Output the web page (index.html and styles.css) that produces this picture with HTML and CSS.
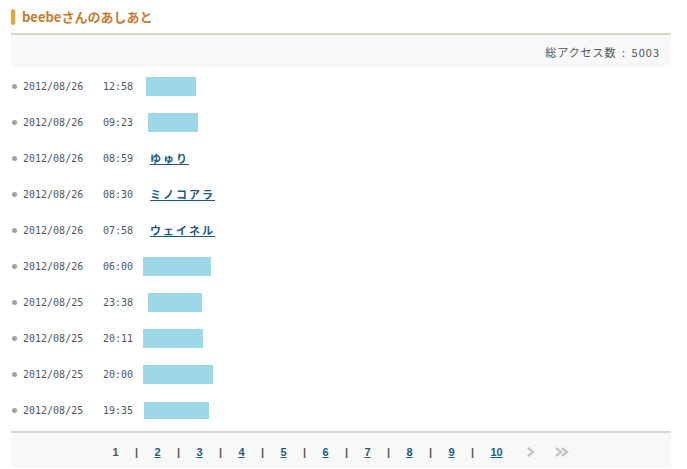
FILE: index.html
```html
<!DOCTYPE html>
<html lang="ja">
<head>
<meta charset="utf-8">
<title>beebeさんのあしあと</title>
<link rel="stylesheet" href="styles.css">
</head>
<body>
<div class="wrap">
  <h1 class="title"><span class="mark"></span>beebeさんのあしあと</h1>
  <div class="summary">総アクセス数 : 5003</div>
  <ul class="list">
    <li class="row"><span class="dot"></span><span class="date">2012/08/26</span><span class="time">12:58</span><span class="bar" style="margin-left:3px;width:50px"></span></li>
    <li class="row"><span class="dot"></span><span class="date">2012/08/26</span><span class="time">09:23</span><span class="bar" style="margin-left:5px;width:50px"></span></li>
    <li class="row"><span class="dot"></span><span class="date">2012/08/26</span><span class="time">08:59</span><a class="name" href="#">ゆゅり</a></li>
    <li class="row"><span class="dot"></span><span class="date">2012/08/26</span><span class="time">08:30</span><a class="name" href="#">ミノコアラ</a></li>
    <li class="row"><span class="dot"></span><span class="date">2012/08/26</span><span class="time">07:58</span><a class="name" href="#">ウェイネル</a></li>
    <li class="row"><span class="dot"></span><span class="date">2012/08/26</span><span class="time">06:00</span><span class="bar" style="margin-left:0;width:68px"></span></li>
    <li class="row"><span class="dot"></span><span class="date">2012/08/25</span><span class="time">23:38</span><span class="bar" style="margin-left:5px;width:54px"></span></li>
    <li class="row"><span class="dot"></span><span class="date">2012/08/25</span><span class="time">20:11</span><span class="bar" style="margin-left:0;width:60px"></span></li>
    <li class="row"><span class="dot"></span><span class="date">2012/08/25</span><span class="time">20:00</span><span class="bar" style="margin-left:0;width:70px"></span></li>
    <li class="row"><span class="dot"></span><span class="date">2012/08/25</span><span class="time">19:35</span><span class="bar" style="margin-left:1px;width:65px;height:17px"></span></li>
  </ul>
  <div class="pager">
    <span class="cur">1</span><span class="sep">|</span>
    <a href="#">2</a><span class="sep">|</span>
    <a href="#">3</a><span class="sep">|</span>
    <a href="#">4</a><span class="sep">|</span>
    <a href="#">5</a><span class="sep">|</span>
    <a href="#">6</a><span class="sep">|</span>
    <a href="#">7</a><span class="sep">|</span>
    <a href="#">8</a><span class="sep">|</span>
    <a href="#">9</a><span class="sep">|</span>
    <a href="#">10</a>
    <span class="arrow"><svg width="10" height="10" viewBox="0 0 10 10"><path d="M2 1 L7 5 L2 9" fill="none" stroke="#c4c4c4" stroke-width="2.4"/></svg></span>
    <span class="arrow dbl"><svg width="14" height="10" viewBox="0 0 14 10"><path d="M1 1 L6 5 L1 9 M7 1 L12 5 L7 9" fill="none" stroke="#c4c4c4" stroke-width="2.4"/></svg></span>
  </div>
</div>
</body>
</html>
```
FILE: styles.css
```css
html, body {
  margin: 0;
  padding: 0;
  background: #fff;
}
.wrap {
  margin-left: 11px;
  width: 660px;
  font-family: "DejaVu Sans Mono", "Noto Sans CJK JP", monospace;
}
.title {
  margin: 0;
  padding-top: 9px;
  height: 24px;
  display: flex;
  align-items: flex-start;
  font-family: "Noto Sans CJK JP", sans-serif;
  font-size: 13px;
  line-height: 16px;
  font-weight: bold;
  color: #c87a2e;
  border-bottom: 2px solid #dcd5c9;
}
.mark {
  width: 4px;
  height: 16px;
  border-radius: 2px;
  background: #f0a232;
  margin-right: 7px;
}
.summary {
  height: 32px;
  background: #f8f8f8;
  display: flex;
  align-items: center;
  justify-content: flex-end;
  padding-right: 11px;
  font-family: "Noto Sans CJK JP", sans-serif;
  font-size: 11px;
  letter-spacing: 1px;
  word-spacing: 2px;
  white-space: pre;
  color: #555;
  padding-top: 1px;
  box-sizing: border-box;
}
.list {
  list-style: none;
  margin: 0 0 3px;
  padding: 1px 0 0;
}
.row {
  height: 36px;
  display: flex;
  align-items: center;
  font-size: 10px;
  color: #555;
}
.dot {
  width: 5px;
  height: 5px;
  border-radius: 50%;
  background: #a0a0a0;
  margin-left: 1px;
  margin-right: 6px;
}
.date {
  width: 80px;
}
.time {
  width: 40px;
}
.bar {
  display: block;
  height: 19px;
  background: #9dd7e8;
}
.name {
  margin-left: 7px;
  font-family: "Noto Sans CJK JP", sans-serif;
  font-size: 11px;
  font-weight: bold;
  letter-spacing: 2px;
  color: #1d5b86;
  text-decoration: underline;
}
.pager {
  border-top: 2px solid #dcd5c9;
  background: #f8f8f8;
  height: 33px;
  display: flex;
  align-items: center;
  justify-content: center;
  gap: 16.4px;
  font-family: "Liberation Sans", sans-serif;
  font-size: 11px;
  font-weight: bold;
  padding-top: 2px;
  box-sizing: content-box;
}
.pager a {
  color: #1d5b86;
  text-decoration: underline;
}
.cur {
  color: #555;
}
.sep {
  color: #555;
}
.arrow {
  display: flex;
  margin-left: 7px;
}
.arrow.dbl {
  margin-left: 3px;
}
```
